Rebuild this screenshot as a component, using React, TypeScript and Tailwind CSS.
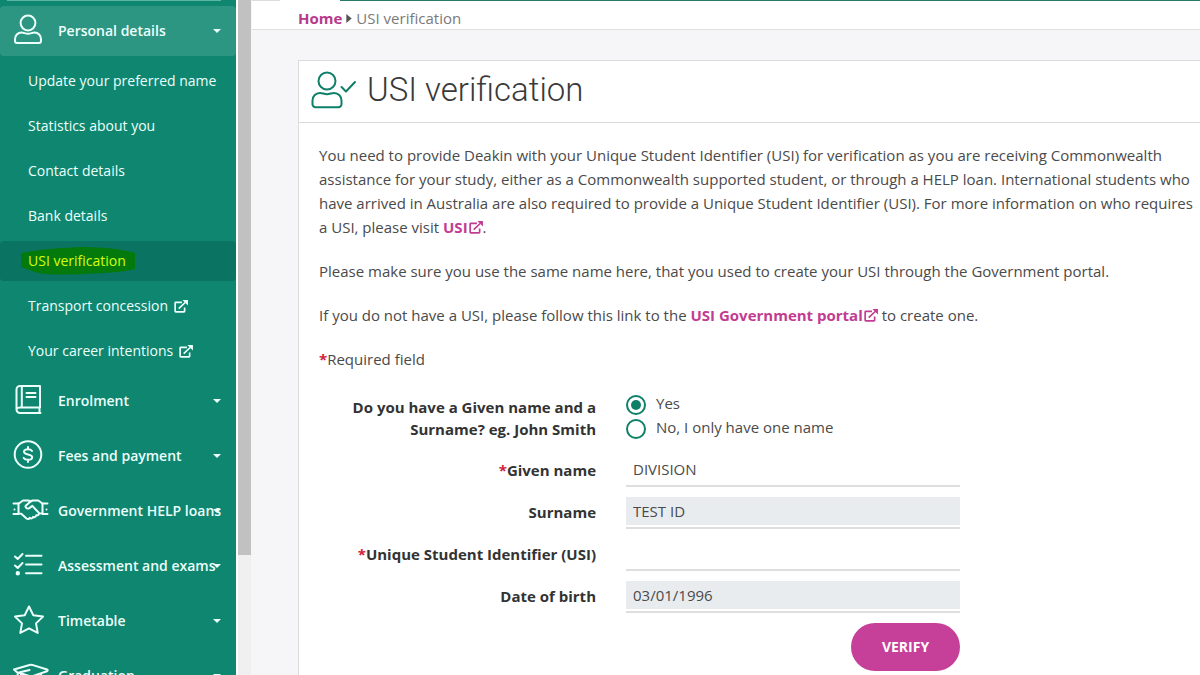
import type { ReactNode } from "react";

const stroke = {
  fill: "none",
  stroke: "currentColor",
  strokeWidth: 2,
  strokeLinecap: "round" as const,
  strokeLinejoin: "round" as const,
};

function NavIcon({ children }: { children: ReactNode }) {
  return (
    <svg viewBox="0 0 38 34" className="h-[34px] w-[38px] shrink-0" aria-hidden="true" {...stroke}>
      {children}
    </svg>
  );
}

const icons = {
  user: (
    <>
      <circle cx="16" cy="9" r="7.4" />
      <path d="M9.6 18.6c2.4 0 3.6 1.2 6.4 1.2s4-1.2 6.4-1.2c4 0 6.6 3 6.6 6.6v1.8a2 2 0 0 1-2 2H5a2 2 0 0 1-2-2v-1.8c0-3.600 2.600-6.600 6.600-6.600z" />
    </>
  ),
  book: (
    <>
      <path d="M28 2H8a3.500 3.500 0 0 0-3.500 3.500V25.500a3.500 3.500 0 0 0 3.500 3.500h20.500M28 2v21.500H8a3.500 3.500 0 0 0-3.500 2M27.500 23.500v5M9.800 2v21" />
      <path d="M14.500 9h9M14.500 13h9" />
    </>
  ),
  coin: (
    <>
      <circle cx="16" cy="15.500" r="13.300" />
      <path d="M16 8v2.200M16 20.800V23M20 12c-.8-1.200-2.200-1.700-4-1.700-2.300 0-4 .9-4 2.500 0 3.700 8.200 1.800 8.200 5.500 0 1.700-1.800 2.500-4.200 2.500-2 0-3.500-.6-4.300-1.900" />
    </>
  ),
  handshake: (
    <g>
      <path d="M1.500 9.500h5.300L11 6.500h5.500l2 1 2-1h5.800l4 3h5.200" />
      <path d="M6.500 9.500v10l2.800.2 5.200 4.800c1.400 1 2.700.6 3.200-.6 1.500 1 3 .5 3.500-1 1.500.7 2.900 0 3-1.600 1.700.3 2.800-.6 2.700-1.800l3.600-.2V9.500" />
      <path d="M18.500 7.500l-4.500 4c-1.200 1.400.6 4 3.300 2.600l3-2.200 6.500 6.800M1.500 20H6.500M30.500 20h5" />
      <path d="M2.500 15.500v.1M34.500 15.500v.1" />
    </g>
  ),
  tasks: (
    <>
      <path d="M3 7.500l2.700 2.500L10.500 5M3 16.500l2.700 2.500 4.800-5M14 6.800h15.500M14 15.500h15.500M14 24.300h15.500" />
      <circle cx="5.800" cy="24.300" r="1.200" fill="currentColor" />
    </>
  ),
  star: <path d="M17 2.500l4.300 8.700 9.700 1.400-7 6.800 1.700 9.500-8.700-4.500-8.700 4.500L10 19.400l-7-6.800 9.700-1.400z" />,
  cap: (
    <>
      <path d="M2 10.500L17.500 6c1.200-.3 2.300-.3 3.500.1l14 4.400c1 .4 1 1.300 0 1.700L21 17c-1.200.4-2.300.4-3.500 0L5 13.300z" />
      <path d="M17.500 11L8 13.200c-2 .6-2.800 2-2.800 4V26M9 15v7c0 5 20 5 20 0v-7" />
    </>
  ),
};

function External({ className }: { className: string }) {
  return (
    <svg viewBox="0 0 15 14" className={className} aria-hidden="true">
      <path d="M8.500 2.500H1.900a.7.700 0 0 0-.7.700v8.900a.7.700 0 0 0 .7.700h8.800a.7.700 0 0 0 .7-.700V8.200M5 9.300l7-6.600" fill="none" stroke="currentColor" strokeWidth="1.800" />
      <path d="M9 0h6v5.800z" fill="currentColor" />
    </svg>
  );
}

const personalLinks = [
  { label: "Update your preferred name" },
  { label: "Statistics about you" },
  { label: "Contact details" },
  { label: "Bank details" },
  { label: "USI verification", active: true },
  { label: "Transport concession", external: true },
  { label: "Your career intentions", external: true },
];

const sections = [
  { label: "Enrolment", icon: icons.book },
  { label: "Fees and payment", icon: icons.coin },
  { label: "Government HELP loans", icon: icons.handshake },
  { label: "Assessment and exams", icon: icons.tasks },
  { label: "Timetable", icon: icons.star },
  { label: "Graduation", icon: icons.cap },
];

function SectionButton({ label, icon, open = false }: { label: string; icon: ReactNode; open?: boolean }) {
  return (
    <button
      type="button"
      aria-expanded={open}
      className={`relative flex h-[50px] w-full shrink-0 items-center gap-2 rounded pl-3 text-left text-sm font-semibold whitespace-nowrap ${open ? "bg-[#2c9682]" : ""}`}
    >
      <NavIcon>{icon}</NavIcon>
      {label}
      <svg viewBox="0 0 8 4" className="absolute top-[23px] right-[15px] h-1 w-2" aria-hidden="true">
        <path d="M0 0h8L4 4z" fill="currentColor" />
      </svg>
    </button>
  );
}

function Sidebar() {
  return (
    <nav aria-label="Student menu" className="flex w-[236px] shrink-0 flex-col gap-[5px] overflow-hidden bg-[#0e8670] text-[#ecfffb]">
      <div className="mr-[15px] ml-[7px] h-px shrink-0 bg-[#5cb5a4]" />
      <SectionButton label="Personal details" icon={icons.user} open />
      {personalLinks.map((l) => (
        <a
          key={l.label}
          href="#"
          className={`flex h-10 shrink-0 items-center rounded pl-7 text-sm whitespace-nowrap ${l.active ? "bg-[#0b7362] text-[#d2ff0a]" : ""}`}
        >
          {l.active ? (
            <span className="relative">
              <svg viewBox="0 0 116 28" preserveAspectRatio="none" className="absolute -top-1 -left-2 h-7 w-[116px]" aria-hidden="true">
                <path d="M1 6C15 3 35 1 62 0c20 0 40 2 53 6v16c-12 3-28 4-50 5-22 1-42 1-50-2L1 20z" fill="#057a0c" />
              </svg>
              <span className="relative">{l.label}</span>
            </span>
          ) : (
            l.label
          )}
          {l.external && <External className="ml-[6px] h-[13px] w-[14px]" />}
        </a>
      ))}
      {sections.map((s) => (
        <SectionButton key={s.label} {...s} />
      ))}
    </nav>
  );
}

const labelClass = "text-right text-[15px] leading-[22px] font-bold text-[#333]";

function Field({ id, label, value, required = false, readOnly = false }: { id: string; label: string; value: string; required?: boolean; readOnly?: boolean }) {
  return (
    <>
      <label htmlFor={id} className={`${labelClass} pt-1`}>
        {required && <span className="text-[#d0213a]">*</span>}
        {label}
      </label>
      <div className="border-b-2 border-[#dedede] pb-[2px]">
        <input
          id={id}
          type="text"
          defaultValue={value}
          readOnly={readOnly}
          className={`block h-7 w-full px-[7px] text-[15px] text-[#4a4a4a] outline-none ${readOnly ? "bg-[#e8ecef]" : "bg-white"}`}
        />
      </div>
    </>
  );
}

function Choice({ label, checked = false }: { label: string; checked?: boolean }) {
  return (
    <label className="flex h-6 items-center gap-[10px] leading-[20px]">
      <input
        type="radio"
        name="names"
        defaultChecked={checked}
        className="size-5 appearance-none rounded-full border-2 border-[#0e8068] bg-white bg-clip-content p-[3px] checked:bg-[#0e8068]"
      />
      <span className="pb-1">{label}</span>
    </label>
  );
}

const linkClass = "font-bold text-[#c23c92]";

export default function App() {
  return (
    <div className="flex h-screen overflow-hidden bg-white font-['Open_Sans',sans-serif]">
      <Sidebar />
      <div className="ml-[2px] w-[13px] shrink-0 bg-[#f0f0f0]">
        <div className="h-[555px] bg-[#c1c1c1]" />
      </div>
      <main className="flex min-w-0 grow flex-col border-l border-[#f5f5f7] bg-[#f6f6f8] text-[15px] text-[#4a4a4a]">
        <div className="flex h-px shrink-0 bg-white">
          <div className="mr-[60px] w-7 bg-[#dcdcdc]" />
          <div className="grow bg-[#2a7a6c]" />
        </div>
        <div className="flex h-[29px] shrink-0 items-center gap-1 border-b border-[#dfdfdf] bg-white pt-[6px] pl-[46px] text-[#7a7a7a]">
          <a href="#" className="font-bold text-[#b8398c]">Home</a>
          <svg viewBox="0 0 6 10" className="h-[9px] w-[6px]" aria-hidden="true">
            <path d="M0 0l6 5-6 5z" fill="#555" />
          </svg>
          <span>USI verification</span>
        </div>
        <section className="mt-[30px] ml-[46px] grow border-t border-l border-[#dcdcdc] bg-white">
          <header className="flex h-[62px] items-center gap-[10px] border-b border-[#dcdcdc] pb-1 pl-3">
            <svg viewBox="0 0 46 38" className="h-[38px] w-[46px] text-[#0e8068]" aria-hidden="true" {...stroke}>
              <circle cx="16" cy="10" r="8.500" />
              <path d="M9 22c2.600 0 4 1.200 7 1.200S20.400 22 23 22c4.600 0 7.500 3.400 7.500 7.500v3.700a3 3 0 0 1-3 3h-23a3 3 0 0 1-3-3v-3.700C1.500 25.400 4.400 22 9 22zM30.500 16l4.500 4.500 9-9.500" />
            </svg>
            <h1 className="font-['Roboto',sans-serif] text-[33px] leading-[40px] font-light text-[#3a3a3a]">USI verification</h1>
          </header>
          <div className="flex flex-col gap-5 py-5 pr-[5px] pl-5 leading-6">
            <p>
              You need to provide Deakin with your Unique Student Identifier (USI) for verification as you are receiving Commonwealth assistance for your study, either as a Commonwealth supported student, or through a HELP loan. International students who have arrived in Australia are also required to provide a Unique Student Identifier (USI). For more information on who requires a USI, please visit{" "}
              <a href="#" className={linkClass}>USI<External className="ml-px inline h-[13px] w-[14px] align-[-1px]" /></a>.
            </p>
            <p>Please make sure you use the same name here, that you used to create your USI through the Government portal.</p>
            <p>
              If you do not have a USI, please follow this link to the{" "}
              <a href="#" className={linkClass}>USI Government portal<External className="ml-px inline h-[13px] w-[14px] align-[-1px]" /></a> to create one.
            </p>
            <p><span className="font-bold text-[#d0213a]">*</span>Required field</p>
            <form className="grid grid-cols-[277px_334px] gap-x-[30px] gap-y-[10px]">
              <div id="names-label" className={`${labelClass} pt-[5px]`}>
                Do you have a Given name and a<br />Surname? eg. John Smith
              </div>
              <div role="radiogroup" aria-labelledby="names-label" className="pt-[2px] pb-1">
                <Choice label="Yes" checked />
                <Choice label="No, I only have one name" />
              </div>
              <Field id="given" label="Given name" value="DIVISION" required />
              <Field id="surname" label="Surname" value="TEST ID" readOnly />
              <Field id="usi" label="Unique Student Identifier (USI)" value="" required />
              <Field id="dob" label="Date of birth" value="03/01/1996" readOnly />
              <div className="col-start-2 flex justify-end">
                <button type="button" className="h-12 w-[109px] rounded-full bg-[#c63f98] text-sm font-bold text-white">VERIFY</button>
              </div>
            </form>
          </div>
        </section>
      </main>
    </div>
  );
}
